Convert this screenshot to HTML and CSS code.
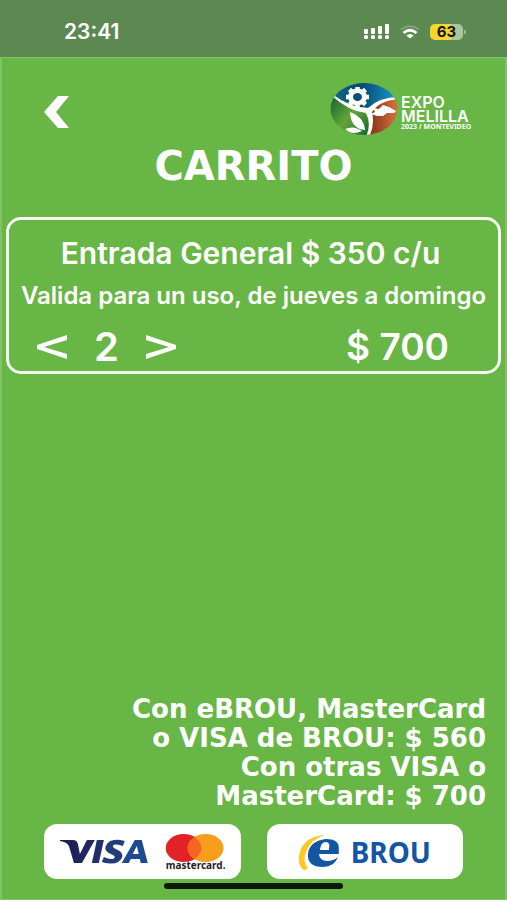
FILE: index.html
```html
<!DOCTYPE html>
<html lang="es">
<head>
<meta charset="utf-8">
<meta name="viewport" content="width=device-width, initial-scale=1">
<title>Carrito</title>
<link rel="stylesheet" href="styles.css">
</head>
<body>
<div class="app">
  <div class="status">
    <span class="clock">23:41</span>
    <div class="indicators">
      <svg class="signal" viewBox="0 0 26 16" aria-hidden="true">
        <g fill="#fff"><rect x="0" y="5" width="4" height="5" rx="1"/><rect x="7" y="4" width="4" height="6" rx="1"/><rect x="14" y="2" width="4" height="8" rx="1"/><rect x="21" y="0" width="4" height="10" rx="1"/><rect x="0" y="11" width="4" height="4" rx="1.5"/><rect x="7" y="11" width="4" height="4" rx="1.5"/><rect x="14" y="11" width="4" height="4" rx="1.5"/><rect x="21" y="11" width="4" height="4" rx="1.5"/></g>
      </svg>
      <svg class="wifi" viewBox="0 0 20 14" aria-hidden="true">
        <path d="M1 4.500Q10-2 19 4.500" fill="none" stroke="#7fa676" stroke-width="2"/>
        <path d="M3.500 8Q10 2.500 16.500 8" fill="none" stroke="#fff" stroke-width="2.800"/>
        <path d="M6.200 10.500Q10 7.500 13.800 10.500L10 13.500Z" fill="#fff"/>
      </svg>
      <span class="battery">63</span>
    </div>
  </div>

  <main class="screen">
    <header class="top">
      <button class="back" type="button" aria-label="Volver">
        <svg viewBox="0 0 26 32" aria-hidden="true"><path d="M14 0H25L12 16L25 32H14L0 16Z" fill="#fff"/></svg>
      </button>
      <svg class="logo" viewBox="0 0 148 56" role="img" aria-label="Expo Melilla">
        <defs>
          <clipPath id="oval"><ellipse cx="34" cy="26" rx="33.500" ry="26"/></clipPath>
          <linearGradient id="sky" x1="0" y1="0" x2="1" y2="0"><stop offset="0" stop-color="#126d8e"/><stop offset=".45" stop-color="#06476f"/><stop offset="1" stop-color="#1c9bd0"/></linearGradient>
          <linearGradient id="leaf" x1="0" y1="0" x2="1" y2="1"><stop offset="0" stop-color="#0a5c35"/><stop offset=".5" stop-color="#65a536"/><stop offset="1" stop-color="#0b6039"/></linearGradient>
          <linearGradient id="earth" x1="0" y1="0" x2="1" y2="0"><stop offset="0" stop-color="#7c2a17"/><stop offset="1" stop-color="#d8733d"/></linearGradient>
        </defs>
        <g clip-path="url(#oval)">
          <path d="M0 0H68V18Q50 16 40 25Q20 24 3 12L0 10Z" fill="url(#sky)"/>
          <path d="M0 10Q18 26 34 29Q42 38 36 56H0Z" fill="url(#leaf)"/>
          <path d="M68 15Q50 17 41 28Q44 42 36 56H68Z" fill="url(#earth)"/>
          <path d="M2 11Q20 25 38 25Q50 14 68 14V16Q49 18 42 29Q45 43 39 54H36Q42 40 36 30Q18 28 1 12Z" fill="#fff"/>
        </g>
        <g fill="#fff">
          <ellipse cx="27.500" cy="14" rx="9.500" ry="8.500"/>
          <g stroke="#fff" stroke-width="4.500"><path d="M27.500 4V24M16 14H39M19.500 6.500L35.500 21.500M35.500 6.500L19.500 21.500"/></g>
          <path d="M20 29Q34 34 35 47Q21 46 20 29ZM15 46Q24 42 32 48Q22 53 15 46Z"/>
          <path d="M41 31L45 29L43 25L49 26L53 22L59 24L66 28L64 30L57 30L53 33L47 33Z"/>
        </g>
        <ellipse cx="27.500" cy="14" rx="4.500" ry="4" fill="#0a4f78"/>
        <text class="logo-name" x="71" y="25">EXPO</text>
        <text class="logo-name" x="71" y="39">MELILLA</text>
        <text class="logo-place" x="71" y="46">2023 / MONTEVIDEO</text>
      </svg>
    </header>

    <h1 class="title">CARRITO</h1>

    <section class="ticket">
      <h2 class="ticket-name">Entrada General $ 350 c/u</h2>
      <p class="ticket-note">Valida para un uso, de jueves a domingo</p>
      <div class="ticket-row">
        <div class="stepper">
          <button type="button" aria-label="Quitar una entrada"><svg viewBox="0 0 32 24" aria-hidden="true"><path d="M31 0V5L8 12L31 19V24L1 14V10Z" fill="#fff"/></svg></button>
          <output class="count">2</output>
          <button type="button" aria-label="Agregar una entrada"><svg viewBox="0 0 32 24" aria-hidden="true"><path d="M1 0V5L24 12L1 19V24L31 14V10Z" fill="#fff"/></svg></button>
        </div>
        <span class="total">$ 700</span>
      </div>
    </section>

    <p class="prices">Con eBROU, MasterCard<br>o VISA de BROU: $ 560<br>Con otras VISA o<br>MasterCard: $ 700</p>

    <div class="methods">
      <button class="method" type="button" aria-label="Pagar con Visa o Mastercard">
        <svg viewBox="0 0 197 55" aria-hidden="true">
          <defs><linearGradient id="visa" x1="0" y1="0" x2="1" y2="0"><stop offset="0" stop-color="#1b1d50"/><stop offset="1" stop-color="#202b66"/></linearGradient></defs>
          <path d="M16 16H29Q33 16 34 20L36 30L43 16H51L38 39H30L25 22Q23 18 16 17Z" fill="url(#visa)"/>
          <path d="M53 16H60L55 39H48Z" fill="#202f6b"/>
          <path d="M81 17L79 22Q70 19 69 22Q69 24 74 26Q80 29 78 34Q75 40 66 39.500Q61 39.500 58 38L60 33Q65 35.500 69 35Q73 33 69 31L65 29Q60 26 62 22Q66 13 81 17Z" fill="#213c7b"/>
          <path fill-rule="evenodd" d="M91 16H98L104 39H97L96 35H87L85 39H78ZM93 22L89 30H95Z" fill="#204a8e"/>
          <ellipse cx="140" cy="24" rx="18" ry="14" fill="#e32227"/>
          <ellipse cx="162" cy="24" rx="18" ry="14" fill="#f99d1e"/>
          <path d="M151 13Q165 24 151 35Q137 24 151 13Z" fill="#f36524"/>
          <text class="mc-name" x="152" y="45" text-anchor="middle">mastercard.</text>
        </svg>
      </button>
      <button class="method" type="button" aria-label="Pagar con eBROU">
        <svg viewBox="0 0 197 55" aria-hidden="true">
          <path d="M58 11Q34 13 32 33Q31 42 37 46L41 45Q35 36 40 26Q45 15 58 11Z" fill="#fbc926"/>
          <path fill-rule="evenodd" d="M59 15Q72 15 72 24L72 30H52Q53 37 60 37Q67 37 71 33Q68 43 56 43Q41 43 41 31Q42 17 59 15ZM53 26H62Q64 18 59 18Q54 18 53 26Z" fill="#1356a3"/>
          <text class="brou-name" x="84" y="39">BROU</text>
        </svg>
      </button>
    </div>
    <div class="home-bar"></div>
  </main>
</div>
</body>
</html>
```
FILE: styles.css
```css
* { box-sizing: border-box; }

body {
  margin: 0;
  background: #68b645;
  color: #fff;
  font-family: Inter, "Liberation Sans", sans-serif;
}

h1, h2, p { margin: 0; }

button {
  padding: 0;
  border: 0;
  background: none;
  cursor: pointer;
}

svg { display: block; }

.app {
  display: flex;
  flex-direction: column;
  min-height: 100vh;
}

.status {
  display: flex;
  align-items: center;
  justify-content: space-between;
  height: 57px;
  padding: 6px 42px 0 64px;
  background: #5b8951;
}

.clock {
  font-size: 21px;
  font-weight: 600;
}

.indicators {
  display: flex;
  align-items: center;
  gap: 10px;
}

.signal { width: 26px; height: 16px; }
.wifi { width: 20px; height: 14px; }

.battery {
  position: relative;
  width: 33px;
  height: 16px;
  margin-right: 2px;
  border-radius: 5px;
  background: linear-gradient(90deg, #f6d62c 63%, #a9c79e 63%);
  color: #171507;
  font-size: 15px;
  font-weight: 700;
  line-height: 16px;
  text-align: center;
}

.battery::after {
  content: "";
  position: absolute;
  top: 6px;
  right: -3px;
  width: 2px;
  height: 4px;
  border-radius: 0 2px 2px 0;
  background: #a9c79e;
}

.screen {
  display: flex;
  flex: 1;
  flex-direction: column;
  padding: 25px 4px 10px;
  border: solid #82c164;
  border-width: 1px 2px;
}

.top {
  display: flex;
  align-items: flex-start;
  justify-content: space-between;
  padding: 0 23px 0 38px;
}

.back { margin-top: 13px; }
.back svg { width: 26px; height: 32px; }
.logo { width: 148px; height: 56px; }

.logo-name {
  fill: #fff;
  font: 600 16px Inter, sans-serif;
}

.logo-place {
  fill: #fff;
  font: 700 7px "Noto Sans", sans-serif;
}

.title {
  margin-top: 4px;
  font: 700 40px/46px "DejaVu Sans", sans-serif;
  text-align: center;
}

.ticket {
  margin-top: 28px;
  padding: 17px 0 4px;
  border: 3px solid #f5fff0;
  border-radius: 15px;
}

.ticket-name {
  padding-right: 6px;
  font-size: 30px;
  font-weight: 600;
  line-height: 32px;
  text-align: center;
}

.ticket-note {
  margin-top: 14px;
  font-size: 24px;
  font-weight: 600;
  line-height: 26px;
  text-align: center;
}

.ticket-row {
  display: flex;
  align-items: center;
  justify-content: space-between;
  margin-top: 18px;
  padding: 0 49px 0 27px;
}

.stepper {
  display: flex;
  align-items: center;
  gap: 26px;
}

.stepper svg { width: 32px; height: 24px; }

.count {
  font-size: 40px;
  font-weight: 600;
  line-height: 40px;
}

.total {
  font-size: 37px;
  font-weight: 600;
  line-height: 40px;
}

.prices {
  margin-top: auto;
  padding-right: 15px;
  font: 700 26px/29px "DejaVu Sans", sans-serif;
  text-align: right;
}

.methods {
  display: grid;
  grid-template-columns: 1fr 1fr;
  gap: 26px;
  margin-top: 13px;
  padding: 0 38px;
}

.method {
  border-radius: 13px;
  background: #fff;
}

.method svg { width: 100%; height: 55px; }

.mc-name {
  fill: #26211f;
  font: 700 10px "Noto Sans", sans-serif;
}

.brou-name {
  fill: #1356a3;
  font: 700 28px "Noto Sans", sans-serif;
}

.home-bar {
  width: 36%;
  height: 6px;
  margin: 4px auto 0;
  border-radius: 3px;
  background: #10180c;
}
```
